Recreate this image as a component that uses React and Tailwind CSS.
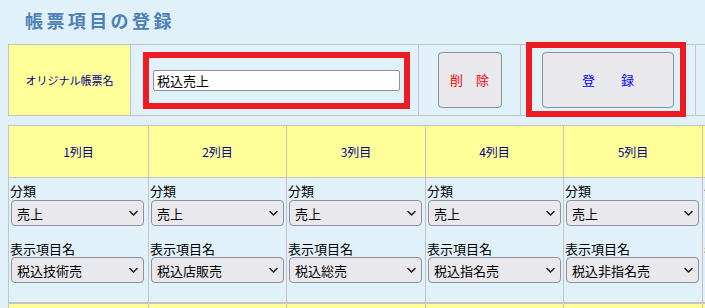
import React from 'react';

const jp = { fontFamily: '"Noto Sans CJK JP", "Noto Sans", sans-serif' };

const columns = [
  { label: '1列目', item: '税込技術売', width: 'w-[140px]' },
  { label: '2列目', item: '税込店販売', width: 'w-[138px]' },
  { label: '3列目', item: '税込総売', width: 'w-[139px]' },
  { label: '4列目', item: '税込指名売', width: 'w-[138px]' },
  { label: '5列目', item: '税込非指名売', width: 'w-[139px]' },
  { label: '6列目', item: '税込その他売', width: 'w-[139px]' },
];

function FakeSelect({ value }) {
  return (
    <div className="relative w-[133px] h-[26px] ml-px rounded-[4px] border border-[#8f8f9d] bg-[#e9e8ed] flex items-center pl-[5px] text-[13px] text-black">
      <span className="leading-none">{value}</span>
      <svg className="absolute right-[5px] top-[9px]" width="9" height="7" viewBox="0 0 9 7" fill="none">
        <path d="M1 1.5 L4.5 5 L8 1.5" stroke="#222" strokeWidth="1.6" strokeLinecap="round" strokeLinejoin="round" />
      </svg>
    </div>
  );
}

export default function App() {
  return (
    <div className="w-[705px] h-[308px] overflow-hidden bg-[#e1f1f9]" style={jp}>
      {/* Title */}
      <div className="h-[44px] pl-[25px] pt-[8px]">
        <h1 className="text-[18px] leading-[24px] font-bold tracking-[3.4px] text-[#4d80b6]">帳票項目の登録</h1>
      </div>

      {/* Header form row */}
      <div className="ml-[8px] flex h-[72px] border-y border-l border-[#c4c4c4] w-[720px]">
        <div className="w-[122px] shrink-0 border-r border-[#c4c4c4] bg-[#ffff99] flex items-center justify-center text-[11px] text-[#00008b]">
          オリジナル帳票名
        </div>
        <div className="w-[288px] shrink-0 border-r border-[#c4c4c4] flex items-center">
          <div className="ml-[12px] w-[267px] h-[57px] border-[6px] border-[#ed1c24] flex items-center pl-[4px]">
            <input
              readOnly
              value="税込売上"
              className="w-[247px] h-[21px] bg-white border border-[#8f8f9d] rounded-[2px] px-[3px] text-[13px] text-black outline-none"
            />
          </div>
        </div>
        <div className="w-[102px] shrink-0 border-r border-[#c4c4c4] flex items-center justify-center">
          <button className="w-[64px] h-[56px] rounded-[4px] border border-[#8f8f9d] bg-[#e9e8ed] text-[13px] text-[#ff0000]">
            削　除
          </button>
        </div>
        <div className="w-[175px] shrink-0 border-r border-[#c4c4c4]">
          <div className="relative z-10 ml-[5px] -mt-[3px] w-[160px] h-[75px] border-[6px] border-[#ed1c24] pl-[10px] pt-[4px]">
            <button className="w-[132px] h-[56px] rounded-[4px] border border-[#8f8f9d] bg-[#e9e8ed] text-[13px] text-[#0000ff]">
              登　　録
            </button>
          </div>
        </div>
        <div className="flex-1" />
      </div>

      {/* Column grid */}
      <div className="ml-[8px] mt-[9px] flex border-t border-[#c4c4c4] w-[900px]">
        {columns.map((col) => (
          <div key={col.label} className={`${col.width} shrink-0 border-l border-[#c4c4c4] flex flex-col`}>
            <div className="h-[52px] bg-[#ffff99] border-b border-[#c4c4c4] flex items-center justify-center text-[12px] text-[#00008b]">
              {col.label}
            </div>
            <div className="h-[124px] pl-px pt-[5px] text-[13px] text-black">
              <div className="leading-[16px]">分類</div>
              <div className="mt-px">
                <FakeSelect value="売上" />
              </div>
              <div className="mt-[15px] leading-[16px]">表示項目名</div>
              <FakeSelect value={col.item} />
            </div>
            <div className="h-[2px] bg-[#c4c4c4]" />
            <div className="h-[20px] bg-[#ffff99]" />
          </div>
        ))}
      </div>
    </div>
  );
}
